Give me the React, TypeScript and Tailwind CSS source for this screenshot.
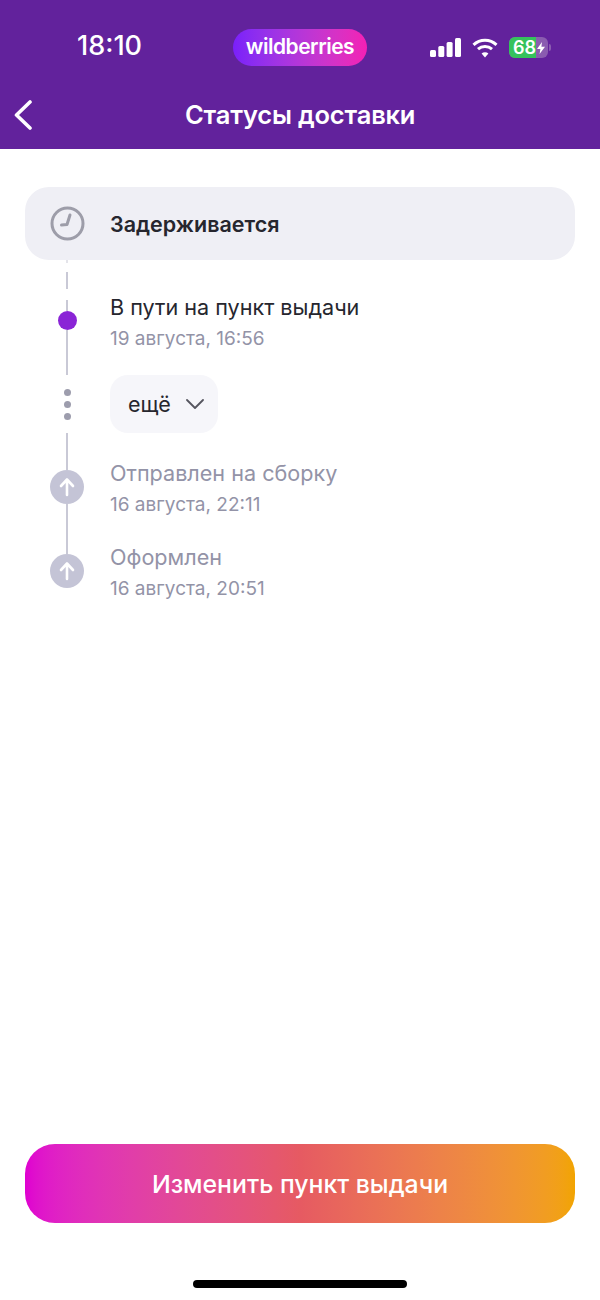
import React from 'react';

const font = { fontFamily: 'Inter, "Noto Sans", sans-serif' };

function StatusBar() {
  return (
    <div className="flex h-[66px] items-end">
      <div className="w-[233px] pb-[4px] pl-[77px] text-[27px] leading-[32px] font-medium text-white">18:10</div>
      <div className="flex h-[37px] w-[134px] items-center justify-center rounded-full bg-gradient-to-r from-[#7a1ffa] to-[#f41fb4] pb-[2px] text-[21px] leading-none font-semibold tracking-[-0.5px] text-white">
        wildberries
      </div>
      <div className="flex h-[37px] items-center pl-[63px]">
        <svg width="31" height="19" viewBox="0 0 31 19" fill="white">
          <rect x="0" y="12" width="6" height="7" rx="1.5" />
          <rect x="8.3" y="8" width="6" height="11" rx="1.5" />
          <rect x="16.6" y="4" width="6" height="15" rx="1.5" />
          <rect x="25" y="0" width="6" height="19" rx="1.5" />
        </svg>
        <svg className="ml-[11px]" width="26" height="20" viewBox="0 0 26 20" fill="none" stroke="white" strokeWidth="3">
          <path d="M1.5 6.8 C8 0.6 18 0.6 24.5 6.8" />
          <path d="M6 11.2 C10 7.6 16 7.6 20 11.2" />
          <path d="M13 19.5 L9.6 15.4 C11.4 13.8 14.6 13.8 16.4 15.4 Z" fill="white" stroke="none" />
        </svg>
        <div className="ml-[11px] flex h-[21px] w-[39px] overflow-hidden rounded-[6px] bg-[#8a5cb0]">
          <div className="flex w-[27px] items-center justify-end bg-[#35c25c] text-[18px] leading-none font-semibold text-white">
            68
          </div>
          <svg className="mt-[5px]" width="10" height="12" viewBox="0 0 10 12" fill="white">
            <path d="M6 0 L1 7 H4.4 L3.6 12 L9 4.8 H5.4 Z" />
          </svg>
        </div>
        <div className="ml-[1px] h-[7px] w-[2px] rounded-r-full bg-[#8a5cb0]" />
      </div>
    </div>
  );
}

function Header() {
  return (
    <div className="h-[149px] bg-[#62229c]">
      <StatusBar />
      <div className="flex h-[83px] items-center pt-[14px]">
        <svg className="ml-[14px]" width="18" height="30" viewBox="0 0 18 30" fill="none" stroke="white" strokeWidth="3.6" strokeLinecap="round" strokeLinejoin="round">
          <path d="M16 2 L2.5 15 L16 28" />
        </svg>
        <div className="ml-[153px] text-[25.5px] leading-[32px] font-semibold tracking-[-0.2px] text-white">Статусы доставки</div>
      </div>
    </div>
  );
}

function Line({ className }: { className: string }) {
  return <div className={`w-[2px] bg-[#c9c9d6] ${className}`} />;
}

function UpIcon() {
  return (
    <div className="flex h-[34px] w-[34px] shrink-0 items-center justify-center rounded-full bg-[#c4c4d6]">
      <svg width="18" height="20" viewBox="0 0 18 20" fill="none" stroke="white" strokeWidth="2.6" strokeLinecap="round" strokeLinejoin="round">
        <path d="M9 18 V3 M3 9 L9 2.5 L15 9" />
      </svg>
    </div>
  );
}

function Event({ title, date, titleColor }: { title: string; date: string; titleColor: string }) {
  return (
    <div>
      <div className={`text-[21.6px] leading-[30px] ${titleColor}`}>{title}</div>
      <div className="mt-[2px] text-[19px] leading-[30px] text-[#9393a7]">{date}</div>
    </div>
  );
}

export default function App() {
  return (
    <div className="flex h-[1300px] w-[600px] flex-col overflow-hidden bg-white" style={font}>
      <Header />

      <div className="px-[25px] pt-[38px]">
        <div className="flex h-[73px] items-center rounded-[24px] bg-[#efeff5]">
          <svg className="ml-[25px]" width="35" height="35" viewBox="0 0 35 35" fill="none" stroke="#9d9da9" strokeWidth="3" strokeLinecap="round" strokeLinejoin="round">
            <circle cx="17.5" cy="17.5" r="15.5" />
            <path d="M20 9 L17 18.5 L11.5 19" />
          </svg>
          <div className="ml-[25px] text-[21.5px] leading-[30px] font-semibold text-[#26262e]">Задерживается</div>
        </div>

        <div className="flex h-[115px]">
          <div className="flex w-[84px] flex-col items-center">
            <Line className="h-[3px] opacity-50" />
            <Line className="mt-[9px] h-[17px]" />
            <Line className="mt-[11px] h-[11px]" />
            <div className="h-[19px] w-[19px] shrink-0 rounded-full bg-[#8a24d6]" />
            <Line className="h-[45px]" />
          </div>
          <div className="ml-[1px] pt-[32px]">
            <Event title="В пути на пункт выдачи" date="19 августа, 16:56" titleColor="text-[#26262e]" />
          </div>
        </div>

        <div className="flex h-[58px]">
          <div className="flex w-[84px] flex-col items-center justify-center gap-[5px]">
            <div className="h-[7px] w-[7px] rounded-full bg-[#9d9dad]" />
            <div className="h-[7px] w-[7px] rounded-full bg-[#9d9dad]" />
            <div className="h-[7px] w-[7px] rounded-full bg-[#9d9dad]" />
          </div>
          <div className="ml-[1px] flex w-[108px] items-center rounded-[18px] bg-[#f6f6fa] pl-[18px] text-[21.5px] text-[#26262e]">
            ещё
            <svg className="ml-[15px]" width="18" height="10" viewBox="0 0 18 10" fill="none" stroke="#55555f" strokeWidth="1.8" strokeLinecap="round" strokeLinejoin="round">
              <path d="M1 1 L9 9 L17 1" />
            </svg>
          </div>
        </div>

        <div className="flex h-[84px]">
          <div className="flex w-[84px] flex-col items-center">
            <Line className="h-[37px]" />
            <UpIcon />
            <Line className="h-[13px]" />
          </div>
          <div className="ml-[1px] pt-[25px]">
            <Event title="Отправлен на сборку" date="16 августа, 22:11" titleColor="text-[#9393a7]" />
          </div>
        </div>

        <div className="flex h-[84px]">
          <div className="flex w-[84px] flex-col items-center">
            <Line className="h-[37px]" />
            <UpIcon />
          </div>
          <div className="ml-[1px] pt-[25px]">
            <Event title="Оформлен" date="16 августа, 20:51" titleColor="text-[#9393a7]" />
          </div>
        </div>
      </div>

      <div className="mt-auto px-[25px]">
        <div className="flex h-[79px] items-center justify-center rounded-[30px] bg-gradient-to-r from-[#df00d0] via-[#e65a62] to-[#f2a400] pt-[3px] text-[24.8px] font-medium text-white">
          Изменить пункт выдачи
        </div>
        <div className="flex justify-center pt-[57px] pb-[12px]">
          <div className="h-[8px] w-[214px] rounded-full bg-black" />
        </div>
      </div>
    </div>
  );
}
